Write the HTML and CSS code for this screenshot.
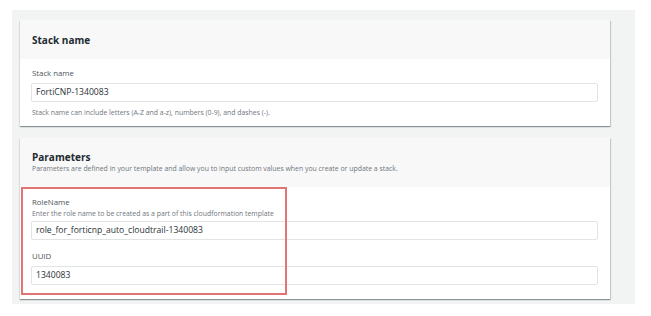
FILE: index.html
```html
<!DOCTYPE html>
<html>
<head>
<meta charset="utf-8">
<link rel="stylesheet" href="styles.css">
</head>
<body>
<div class="page">
  <div class="cards">
    <section class="card">
      <header class="card-head card-head-1">
        <h2 class="title">Stack name</h2>
      </header>
      <div class="card-body body-1">
        <div class="label">Stack name</div>
        <div class="input">FortiCNP-1340083</div>
        <div class="hint">Stack name can include letters (A-Z and a-z), numbers (0-9), and dashes (-).</div>
      </div>
    </section>
    <section class="card">
      <header class="card-head card-head-2">
        <h2 class="title">Parameters</h2>
        <div class="desc">Parameters are defined in your template and allow you to input custom values when you create or update a stack.</div>
      </header>
      <div class="card-body body-2">
        <div class="label">RoleName</div>
        <div class="hint hint-top">Enter the role name to be created as a part of this cloudformation template</div>
        <div class="input">role_for_forticnp_auto_cloudtrail-1340083</div>
        <div class="label label-gap">UUID</div>
        <div class="input">1340083</div>
        <div class="highlight"></div>
      </div>
    </section>
  </div>
</div>
</body>
</html>
```
FILE: styles.css
```css
html, body {
  margin: 0;
  padding: 0;
  background: #ffffff;
}
body {
  font-family: "Open Sans", "Noto Sans", sans-serif;
  color: #16191f;
}
.page {
  margin: 10px 0 0 12px;
  width: 623px;
  height: 294px;
  background: #f2f3f3;
  box-sizing: border-box;
  padding: 10px 25px 0 8px;
}
.cards {
  display: flex;
  flex-direction: column;
  gap: 12px;
}
.card {
  background: #ffffff;
  box-shadow: 0 1px 1px 0 rgba(0, 28, 36, 0.3), 1px 1px 1px 0 rgba(0, 28, 36, 0.15), -1px 1px 1px 0 rgba(0, 28, 36, 0.05);
}
.card-head {
  background: #f8f8f8;
  padding: 0 12px;
  box-sizing: border-box;
}
.card-head-1 {
  height: 39px;
  display: flex;
  align-items: center;
}
.card-head-2 {
  height: 49px;
  padding-top: 12px;
}
.title {
  margin: 0;
  font-size: 10px;
  line-height: 14px;
  font-weight: 700;
  color: #232a31;
}
.desc {
  font-size: 6.9px;
  line-height: 8px;
  margin-top: 1px;
  color: #6f767d;
  white-space: nowrap;
}
.card-body {
  position: relative;
  padding: 0 12px 0 11px;
}
.body-1 {
  height: 67px;
  padding-top: 9px;
  box-sizing: border-box;
}
.body-2 {
  height: 112px;
  padding-top: 10px;
  box-sizing: border-box;
}
.label {
  font-size: 7.8px;
  line-height: 11px;
  color: #4d545b;
  padding-left: 1px;
}
.label-gap {
  margin-top: 11px;
}
.input {
  margin-top: 4px;
  height: 19px;
  box-sizing: border-box;
  border: 1px solid #e1e4e4;
  border-radius: 2px;
  font-size: 8.6px;
  line-height: 17px;
  padding-left: 4px;
  color: #2a3036;
}
.hint {
  margin-top: 6px;
  font-size: 6.9px;
  line-height: 9px;
  color: #6f767d;
  padding-left: 1px;
  white-space: nowrap;
}
.hint-top {
  margin-top: 1px;
}
.hint-top + .input {
  margin-top: 3px;
}
.highlight {
  position: absolute;
  left: 1px;
  top: 0;
  width: 266px;
  height: 108px;
  box-sizing: border-box;
  border: 2px solid #e27474;
  pointer-events: none;
}
```
